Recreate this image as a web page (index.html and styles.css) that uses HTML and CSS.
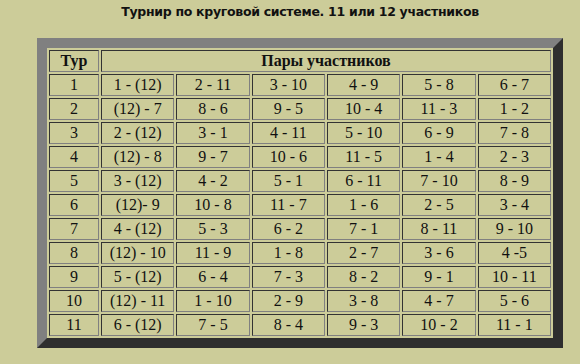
FILE: index.html
```html
<!DOCTYPE html>
<html lang="ru">
<head>
<meta charset="utf-8">
<title>Турнир по круговой системе</title>
<link rel="stylesheet" href="styles.css">
</head>
<body>
<div class="page">
  <h1 class="title">Турнир по круговой системе. 11 или 12 участников</h1>
  <table class="grid">
    <colgroup>
      <col class="c-round">
      <col><col><col><col><col><col>
    </colgroup>
    <tr class="head"><th>Тур</th><th colspan="6">Пары участников</th></tr>
    <tr><td>1</td><td>1 - (12)</td><td>2 - 11</td><td>3 - 10</td><td>4 - 9</td><td>5 - 8</td><td>6 - 7</td></tr>
    <tr><td>2</td><td>(12) - 7</td><td>8 - 6</td><td>9 - 5</td><td>10 - 4</td><td>11 - 3</td><td>1 - 2</td></tr>
    <tr><td>3</td><td>2 - (12)</td><td>3 - 1</td><td>4 - 11</td><td>5 - 10</td><td>6 - 9</td><td>7 - 8</td></tr>
    <tr><td>4</td><td>(12) - 8</td><td>9 - 7</td><td>10 - 6</td><td>11 - 5</td><td>1 - 4</td><td>2 - 3</td></tr>
    <tr><td>5</td><td>3 - (12)</td><td>4 - 2</td><td>5 - 1</td><td>6 - 11</td><td>7 - 10</td><td>8 - 9</td></tr>
    <tr><td>6</td><td>(12)- 9</td><td>10 - 8</td><td>11 - 7</td><td>1 - 6</td><td>2 - 5</td><td>3 - 4</td></tr>
    <tr><td>7</td><td>4 - (12)</td><td>5 - 3</td><td>6 - 2</td><td>7 - 1</td><td>8 - 11</td><td>9 - 10</td></tr>
    <tr><td>8</td><td>(12) - 10</td><td>11 - 9</td><td>1 - 8</td><td>2 - 7</td><td>3 - 6</td><td>4 -5</td></tr>
    <tr><td>9</td><td>5 - (12)</td><td>6 - 4</td><td>7 - 3</td><td>8 - 2</td><td>9 - 1</td><td>10 - 11</td></tr>
    <tr><td>10</td><td>(12) - 11</td><td>1 - 10</td><td>2 - 9</td><td>3 - 8</td><td>4 - 7</td><td>5 - 6</td></tr>
    <tr><td>11</td><td>6 - (12)</td><td>7 - 5</td><td>8 - 4</td><td>9 - 3</td><td>10 - 2</td><td>11 - 1</td></tr>
  </table>
</div>
</body>
</html>
```

FILE: styles.css
```css
html, body {
  margin: 0;
  padding: 0;
  background: #cccc99;
}

.page {
  width: 600px;
  padding-top: 4px;
}

.title {
  margin: 0;
  font-family: "DejaVu Sans", Verdana, sans-serif;
  font-size: 12.5px;
  letter-spacing: -0.3px;
  line-height: 16px;
  font-weight: bold;
  color: #111;
  text-align: center;
}

.grid {
  margin: 18px auto 0;
  width: 526px;
  table-layout: fixed;
  border-collapse: separate;
  border-spacing: 2px;
  border-style: solid;
  border-width: 10px;
  border-color: #808080 #2e2e2e #2e2e2e #808080;
  background: #cccc99;
  font-family: "Liberation Serif", "Times New Roman", serif;
  font-size: 16px;
  color: #111;
}

.c-round {
  width: 50px;
}

.grid th,
.grid td {
  height: 20px;
  padding: 0;
  line-height: 20px;
  text-align: center;
  border-style: solid;
  border-width: 1px;
  border-color: #333333 #808080 #808080 #333333;
}

.grid th {
  font-weight: bold;
}
```
